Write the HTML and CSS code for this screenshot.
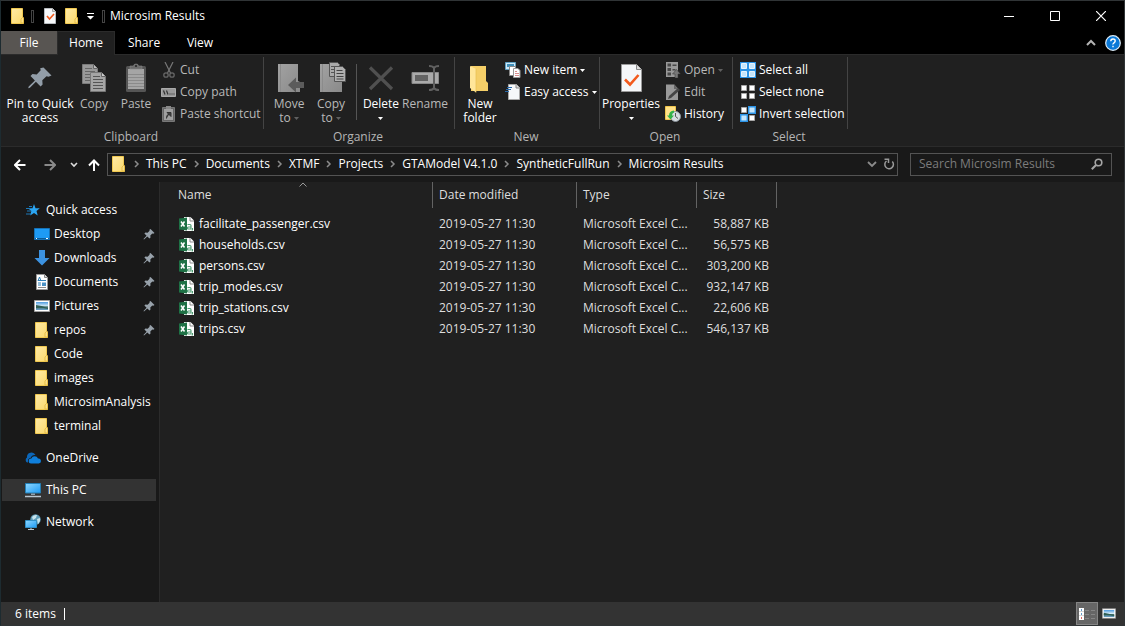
FILE: index.html
```html
<!DOCTYPE html>
<html lang="en">
<head>
  <meta charset="UTF-8">
  <meta name="viewport" content="width=device-width, initial-scale=1.0">
  <title>Microsim Results</title>
  <link rel="stylesheet" href="styles.css">
</head>
<body>

  <!-- Shared icons -->
  <svg class="sprite" aria-hidden="true">
    <linearGradient id="folder-fill" x1="0" y1="0" x2="1" y2="1">
      <stop offset="0" stop-color="#ffeaa5"/><stop offset="1" stop-color="#fbd96c"/>
    </linearGradient>
    <linearGradient id="screen-fill" x1="0" y1="0" x2="1" y2="1">
      <stop offset="0" stop-color="#8fd8ff"/><stop offset="1" stop-color="#1e9bf5"/>
    </linearGradient>
    <linearGradient id="gray-fill" x1="0" y1="0" x2="1" y2="1">
      <stop offset="0" stop-color="#a2a2a2"/><stop offset="1" stop-color="#8a8a8a"/>
    </linearGradient>
    <linearGradient id="sky-fill" x1="0" y1="0" x2="0" y2="1">
      <stop offset="0" stop-color="#4d9be0"/><stop offset="0.5" stop-color="#d5ebf7"/><stop offset="0.6" stop-color="#3b6b62"/><stop offset="1" stop-color="#6ea3cf"/>
    </linearGradient>
    <symbol id="folder" viewBox="0 0 16 16">
      <path d="M1.500 0.500h11v9.500l1 .5v5h-12z" fill="url(#folder-fill)" stroke="#f0c850"/>
      <path d="M11 15v-4l1.500-1.500h1v5.500z" fill="#fbe08a" stroke="#e3b63a" stroke-width=".8"/>
    </symbol>
    <symbol id="pushpin" viewBox="0 0 12 12">
      <path d="M7.500 1l4 4-1.200.8-1-.2-2 2 .2 2-1 1L4.300 8.400 1 11.500l-.5-.5 3.100-3.300L1.400 5.500l1-1 2.200.2 2-2-.2-1z" fill="#98a2ab"/>
    </symbol>
    <symbol id="csv" viewBox="0 0 16 16">
      <path d="M5 1h6.500L15 4.500V15H5z" fill="#fff"/>
      <path d="M11 1v4h4" fill="none" stroke="#8c8c8c"/>
      <path d="M0 2.500L8 1.500v13l-8-1z" fill="#1e7145"/>
      <path d="M2 5.500l3.500 5M5.500 5.500L2 10.500" stroke="#fff" stroke-width="1.500"/>
      <path d="M8.500 8.500h2.500q1 0 1 1V13h-2.500q-1.200 0-1.200-1t1.200-1H12M13.500 12v1.500l-.6 1" fill="none" stroke="#4f9d74" stroke-width="1.100"/>
    </symbol>
    <symbol id="caret" viewBox="0 0 5 3"><path d="M0 0h5L2.500 3z" fill="currentColor"/></symbol>
    <symbol id="chevron" viewBox="0 0 6 8"><path d="M1 1l3 3-3 3" fill="none" stroke="#8b8b8b" stroke-width="1.500"/></symbol>
    <symbol id="picture" viewBox="0 0 16 12">
      <path d="M.5.500h15v11H.5z" fill="#fff" stroke="#a0a0a0"/>
      <path d="M2 2h12v8H2z" fill="url(#sky-fill)"/>
      <path d="M2 5q5 .5 12 3v1Q7 7 2 8z" fill="#2f5f55"/>
    </symbol>
  </svg>

  <div class="window">

    <!-- Title bar -->
    <header class="title-bar">
      <svg class="icon" viewBox="0 0 16 16"><use href="#folder"/></svg>
      <span class="grip"></span>
      <button class="quick" aria-label="Properties">
        <svg class="icon" viewBox="0 0 16 16"><path d="M2.500.500h8l3 3v12h-11z" fill="#f6f8fa" stroke="#b8bcc0"/><path d="M10.500.500v3h3" fill="#ddd" stroke="#a5a5a5"/><path d="M5 8l2.500 3L12 6" fill="none" stroke="#f25a1d" stroke-width="1.600"/></svg>
      </button>
      <button class="quick" aria-label="New folder">
        <svg class="icon" viewBox="0 0 16 16"><use href="#folder"/></svg>
      </button>
      <button class="quick customize" aria-label="Customize Quick Access Toolbar">
        <svg width="7" height="7" viewBox="0 0 7 7"><path d="M0 0h7v1H0zM0 3h7L3.500 6.500z" fill="#fff"/></svg>
      </button>
      <span class="grip"></span>
      <h1>Microsim Results</h1>
      <div class="window-controls">
        <button aria-label="Minimize"><svg width="10" height="10"><path d="M0 5.500h10" stroke="#fff"/></svg></button>
        <button aria-label="Maximize"><svg width="10" height="10"><path d="M.5.500h9v9h-9z" fill="none" stroke="#fff"/></svg></button>
        <button aria-label="Close"><svg width="10" height="10"><path d="M0 0l10 10M10 0L0 10" stroke="#fff" stroke-width="1.200"/></svg></button>
      </div>
    </header>

    <!-- Ribbon tabs -->
    <nav class="tabs">
      <button class="tab file">File</button>
      <button class="tab active">Home</button>
      <button class="tab">Share</button>
      <button class="tab view">View</button>
      <div class="tabs-right">
        <button aria-label="Minimize the Ribbon"><svg width="10" height="7"><path d="M1 6l4-4 4 4" fill="none" stroke="#b4b4b4" stroke-width="2"/></svg></button>
        <button aria-label="Help"><svg width="16" height="16"><circle cx="8" cy="8" r="7.300" fill="#0a79d8" stroke="#dcecf8" stroke-width="1.200"/><path d="M5.800 6.200q0-2.200 2.200-2.200t2.200 2q0 1-1.200 1.800T8 9.500M8 10.800v1.500" fill="none" stroke="#fff" stroke-width="1.400"/></svg></button>
      </div>
    </nav>

    <!-- Ribbon -->
    <section class="ribbon">
      <div class="group clipboard">
        <div class="group-body">
          <button class="big wide">
            <svg class="large-icon" viewBox="0 0 32 32"><path d="M19.500 5.500l8 8-3 1.200-2-.4-4.200 4 .3 4.200-2 2-4.700-4.700-6 6-1.700.500.500-1.700 6.200-6-4.400-4.600 2-2 4.200.4 4-4.200-.5-2z" fill="#929da8"/></svg>
            <span>Pin to Quick<br>access</span>
          </button>
          <button class="big disabled">
            <svg class="large-icon" viewBox="0 0 32 32">
              <path d="M4.500 2.500h11l4 4v15h-15z" fill="#999" stroke="#7b7b7b"/><path d="M15.500 2.500v4h4" fill="#bbb" stroke="#666"/>
              <path d="M7 6.500h7M7 9.500h10M7 12.500h10M7 15.500h10M7 18.500h10" stroke="#666"/>
              <path d="M12.500 10.500h11l4 4v15h-15z" fill="#a5a5a5" stroke="#777"/><path d="M23.500 10.500v4h4" fill="#ccc" stroke="#666"/>
              <path d="M15 14.500h7M15 17.500h10M15 20.500h10M15 23.500h10M15 26.500h10" stroke="#555"/>
            </svg>
            <span>Copy</span>
          </button>
          <button class="big disabled">
            <svg class="large-icon" viewBox="0 0 32 32">
              <rect x="6" y="4" width="20" height="26" rx="1.500" fill="#555"/><path d="M8 7h16v20H8z" fill="#a5a5a5"/>
              <path d="M8 12.500h16M8 15.500h16M8 18.500h16M8 21.500h16M8 24.500h16" stroke="#8a8a8a"/>
              <path d="M10 7V4h3.500q0-2 2.500-2t2.500 2H22v3z" fill="#6b6b6b" stroke="#888" stroke-width=".6"/><circle cx="16" cy="4" r="1" fill="#222"/>
            </svg>
            <span>Paste</span>
          </button>
          <div class="small-list">
            <button class="small disabled"><svg class="icon" viewBox="0 0 16 16"><path d="M4 0l5.500 11M12 0L6.500 11" stroke="#777" stroke-width="1.200"/><circle cx="5" cy="13" r="2.200" fill="none" stroke="#666" stroke-width="1.300"/><circle cx="11" cy="13" r="2.200" fill="none" stroke="#666" stroke-width="1.300"/></svg>Cut</button>
            <button class="small disabled"><svg class="icon" viewBox="0 0 16 16"><path d="M.5 4.500h14v8H.5z" fill="#999" stroke="#aaa"/><path d="M2.500 6.500l1.500 4M5.500 6.500l1.500 4M8.500 10h1M10.500 10h1M12.500 10h1" stroke="#333" stroke-width="1.200"/></svg>Copy path</button>
            <button class="small disabled"><svg class="icon" viewBox="0 0 16 16"><path d="M1.500 1.500h12v14h-12z" fill="#666" stroke="#777"/><path d="M3 3h9v11H3z" fill="#a0a0a0"/><path d="M5 0h5v3H5z" fill="#888"/><path d="M5.500 12.500q-.5-4 3-4.500M6 6.500h4v4z" fill="#444" stroke="#333"/></svg>Paste shortcut</button>
          </div>
        </div>
        <h2>Clipboard</h2>
      </div>

      <div class="group organize">
        <div class="group-body">
          <button class="big disabled">
            <svg class="large-icon" viewBox="0 0 32 32"><path d="M5 2h20v17l2 1v10H5z" fill="url(#gray-fill)"/><path d="M7.500 2v28" stroke="#8b8b8b"/><path d="M15 23l8-7.500v4.500h8v6h-8v4.500z" fill="#5b5b5b"/></svg>
            <span>Move<br>to <svg class="caret"><use href="#caret"/></svg></span>
          </button>
          <button class="big disabled">
            <svg class="large-icon" viewBox="0 0 32 32">
              <path d="M5 2h20v17l2 1v10H5z" fill="url(#gray-fill)"/><path d="M7.500 2v28" stroke="#8b8b8b"/>
              <path d="M14.500.500h8l2 2v12h-10z" fill="#aaa" stroke="#555"/><path d="M16 4.500h5M16 7.500h5M16 10.500h5" stroke="#555"/>
              <path d="M19.500 4.500h8l3 3v12h-11z" fill="#b0b0b0" stroke="#555"/><path d="M21.500 8.500h6M21.500 11.500h7M21.500 14.500h7M21.500 17h7" stroke="#444"/>
            </svg>
            <span>Copy<br>to <svg class="caret"><use href="#caret"/></svg></span>
          </button>
          <span class="divider"></span>
          <button class="big">
            <svg class="large-icon" viewBox="0 0 32 32"><path d="M5 5.500l22 21.500M27 5.500L5 27" stroke="#505050" stroke-width="3.200"/></svg>
            <span>Delete<br><svg class="caret"><use href="#caret"/></svg></span>
          </button>
          <button class="big disabled rename">
            <svg class="large-icon" viewBox="0 0 32 32"><path d="M3 10.500h26.500v11H3z" fill="#aaa" stroke="#888"/><path d="M6 13h13v6H6z" fill="#636363"/><path d="M20 4q4 0 5 2 1-2 5-2M25 5v22M20 28q4 0 5-2 1 2 5 2" fill="none" stroke="#606060" stroke-width="2"/></svg>
            <span>Rename</span>
          </button>
        </div>
        <h2>Organize</h2>
      </div>

      <div class="group new">
        <div class="group-body">
          <button class="big">
            <svg class="large-icon" viewBox="0 0 32 32"><path d="M7 4h15v15l2 2v8H7z" fill="#f5cf68"/><path d="M6 4l6 3v23.500L6 26z" fill="#ffe69a"/><path d="M12 7v23.500" stroke="#e8bd50" stroke-width=".7"/></svg>
            <span>New<br>folder</span>
          </button>
          <div class="small-list">
            <button class="small"><svg class="icon" viewBox="0 0 16 16"><path d="M.5.500h10v7H.5z" fill="#cfe9f8" stroke="#5f9fc0"/><path d="M2 2h7v3H2z" fill="#3e8eb8"/><path d="M4.500 4.500h6v9h-6z" fill="#fff" stroke="#888"/><path d="M8.500 6.500h4.500l2 2v7H8.500z" fill="#fff" stroke="#999"/><path d="M10 9.500h2M10 11.500h4M10 13.500h4" stroke="#d98c8c"/></svg>New item <svg class="caret"><use href="#caret"/></svg></button>
            <button class="small"><svg class="icon" viewBox="0 0 16 16"><path d="M3.500.500h8l3 3v12h-11z" fill="#f6f8fa" stroke="#aaa"/><path d="M11 .5V4h3.500" fill="#ddd" stroke="#888"/><path d="M2 3.500h5M1 5.500h5M0 7.500h4" stroke="#2868a8"/></svg>Easy access <svg class="caret"><use href="#caret"/></svg></button>
          </div>
        </div>
        <h2>New</h2>
      </div>

      <div class="group open">
        <div class="group-body">
          <button class="big properties">
            <svg class="large-icon" viewBox="0 0 32 32"><path d="M6.500 2.500h15l5 5v22h-20z" fill="#f5f7f9" stroke="#9a9a9a"/><path d="M21.500 2.500v5h5" fill="#ddd" stroke="#888"/><path d="M10 17.500l5 5L23.500 13" fill="none" stroke="#f25a1d" stroke-width="2.600"/></svg>
            <span>Properties<br><svg class="caret"><use href="#caret"/></svg></span>
          </button>
          <div class="small-list">
            <button class="small disabled"><svg class="icon" viewBox="0 0 16 16"><path d="M1 0h12v15H1z" fill="#999"/><path d="M2.500 1.500h3.500v3H2.500zM2.500 6h3.500v3H2.500zM2.500 10.500h3.500v3H2.500zM7.500 2.500h4V4h-4zM7.500 7h3v1.500h-3z" fill="#484848"/><path d="M11.500 7.500l4 4.500H13v4h-3v-4H7.500z" fill="#777" stroke="#333" stroke-width=".5"/></svg>Open <svg class="caret"><use href="#caret"/></svg></button>
            <button class="small disabled"><svg class="icon" viewBox="0 0 16 16"><path d="M1 .5h8l4 4V16H1z" fill="#999"/><path d="M9 0v5h4" fill="#666"/><path d="M3 15l1-3 9-8 2 2-9 8z" fill="#454545"/></svg>Edit</button>
            <button class="small"><svg class="icon" viewBox="0 0 16 16"><path d="M.5.500h10v13H.5z" fill="#ffe28a" stroke="#efc54c"/><circle cx="10.500" cy="10.500" r="5" fill="#d8dde2" stroke="#8b949c"/><path d="M10.500 7v3.500l2.500 2" fill="none" stroke="#555"/><path d="M9 4.500q-5 .5-5 5H2l3.500 4L9 9.500H7q0-2.500 2-3z" fill="#35b24a"/></svg>History</button>
          </div>
        </div>
        <h2>Open</h2>
      </div>

      <div class="group select">
        <div class="group-body">
          <div class="small-list">
            <button class="small"><svg class="icon" viewBox="0 0 16 16"><path d="M0 0h16v16H0z" fill="#2b93e6"/><path d="M1.500 1.500h5v5h-5zM9.500 1.500h5v5h-5zM1.500 9.500h5v5h-5zM9.500 9.500h5v5h-5z" fill="#c5e5fb" stroke="#e6f4fd"/></svg>Select all</button>
            <button class="small"><svg class="icon" viewBox="0 0 16 16"><path d="M1.500 1.500h5v5h-5zM9.500 1.500h5v5h-5zM1.500 9.500h5v5h-5zM9.500 9.500h5v5h-5z" fill="#fff" stroke="#a8a8a8"/></svg>Select none</button>
            <button class="small"><svg class="icon" viewBox="0 0 16 16"><path d="M1.500 1.500h5v5h-5zM9.500 9.500h5v5h-5z" fill="#fff" stroke="#a8a8a8"/><path d="M8.700.700h6.600v6.600H8.700zM.7 8.700h6.600v6.600H.7z" fill="#c5e5fb" stroke="#2b93e6" stroke-width="1.400"/></svg>Invert selection</button>
          </div>
        </div>
        <h2>Select</h2>
      </div>
    </section>

    <!-- Navigation and address bar -->
    <div class="address-row">
      <div class="history">
        <button aria-label="Back"><svg width="12" height="12"><path d="M11.500 6H1.500M6 1L1 6l5 5" fill="none" stroke="#fff" stroke-width="2"/></svg></button>
        <button aria-label="Forward"><svg width="12" height="12"><path d="M.5 6h10M6 1l5 5-5 5" fill="none" stroke="#8a8a8a" stroke-width="2"/></svg></button>
        <button class="recent" aria-label="Recent locations"><svg width="8" height="6"><path d="M1 1l3 3 3-3" fill="none" stroke="#ddd" stroke-width="1.600"/></svg></button>
        <button class="up" aria-label="Up"><svg width="12" height="12"><path d="M6 12V1.500M1 6.500l5-5 5 5" fill="none" stroke="#fff" stroke-width="2"/></svg></button>
      </div>
      <nav class="address">
        <svg class="icon" viewBox="0 0 16 16"><use href="#folder"/></svg>
        <ol>
          <li><svg class="chevron"><use href="#chevron"/></svg><a href="#">This PC</a></li>
          <li><svg class="chevron"><use href="#chevron"/></svg><a href="#">Documents</a></li>
          <li><svg class="chevron"><use href="#chevron"/></svg><a href="#">XTMF</a></li>
          <li><svg class="chevron"><use href="#chevron"/></svg><a href="#">Projects</a></li>
          <li><svg class="chevron"><use href="#chevron"/></svg><a href="#">GTAModel V4.1.0</a></li>
          <li><svg class="chevron"><use href="#chevron"/></svg><a href="#">SyntheticFullRun</a></li>
          <li><svg class="chevron"><use href="#chevron"/></svg><a href="#">Microsim Results</a></li>
        </ol>
        <button aria-label="Previous locations"><svg width="10" height="7"><path d="M1 1l4 4 4-4" fill="none" stroke="#8b8b8b" stroke-width="1.800"/></svg></button>
        <button aria-label="Refresh"><svg width="12" height="12"><path d="M9.300 3.500A4.300 4.300 0 1 1 3.500 3M1.500 1.200h4V5" fill="none" stroke="#9a9a9a" stroke-width="1.500"/></svg></button>
      </nav>
      <form class="search">
        <input type="search" placeholder="Search Microsim Results" aria-label="Search Microsim Results">
        <svg width="12" height="12"><circle cx="7.500" cy="4.500" r="3.300" fill="none" stroke="#a5a5a5" stroke-width="1.600"/><path d="M5 7L.8 11.200" stroke="#a5a5a5" stroke-width="2"/></svg>
      </form>
    </div>

    <div class="content">
      <!-- Navigation pane -->
      <nav class="sidebar">
        <ul>
          <li><a href="#"><svg class="icon" viewBox="0 0 16 16"><path d="M9 2l1.500 4.200h4.300L11.500 9l1.200 4.500L9 11l-3.800 2.500L6.300 9 3 6.200h4.500z" fill="#2ba5f2"/><path d="M1 6.500h5M2 9h4M1 12h5M4 4.500h3" stroke="#1c78b8"/></svg>Quick access</a></li>
          <li class="child"><a href="#"><svg class="icon" viewBox="0 0 16 16"><path d="M.5 2.500h15v11H.5z" fill="#1e9bf5" stroke="#1673b8"/><path d="M1 12.500h14" stroke="#0d5c98"/><path d="M2 12.500h1M12 12.500h2" stroke="#fff"/></svg>Desktop</a><svg class="pin"><use href="#pushpin"/></svg></li>
          <li class="child"><a href="#"><svg class="icon" viewBox="0 0 16 16"><path d="M5 0h6v8h4.500L8 15.500.5 8H5z" fill="#3c92e0"/></svg>Downloads</a><svg class="pin"><use href="#pushpin"/></svg></li>
          <li class="child"><a href="#"><svg class="icon" viewBox="0 0 16 16"><path d="M2.500.500h8l3 3v12h-11z" fill="#fff" stroke="#999"/><path d="M10.500.500v3h3" fill="#ddd" stroke="#888"/><path d="M4 7l1.500-4L7 7M4 6.500h8M4 9h3M4 11h3" fill="none" stroke="#2f80b8"/><path d="M8 8.500h4V12H8z" fill="#4b91c4"/><path d="M4 13.500h8" stroke="#8c8c8c"/></svg>Documents</a><svg class="pin"><use href="#pushpin"/></svg></li>
          <li class="child"><a href="#"><svg class="icon" viewBox="0 0 16 12"><use href="#picture"/></svg>Pictures</a><svg class="pin"><use href="#pushpin"/></svg></li>
          <li class="child"><a href="#"><svg class="icon" viewBox="0 0 16 16"><use href="#folder"/></svg>repos</a><svg class="pin"><use href="#pushpin"/></svg></li>
          <li class="child"><a href="#"><svg class="icon" viewBox="0 0 16 16"><use href="#folder"/></svg>Code</a></li>
          <li class="child"><a href="#"><svg class="icon" viewBox="0 0 16 16"><use href="#folder"/></svg>images</a></li>
          <li class="child"><a href="#"><svg class="icon" viewBox="0 0 16 16"><use href="#folder"/></svg>MicrosimAnalysis</a></li>
          <li class="child"><a href="#"><svg class="icon" viewBox="0 0 16 16"><use href="#folder"/></svg>terminal</a></li>
        </ul>
        <ul>
          <li><a href="#"><svg class="icon" viewBox="0 0 16 16"><path d="M2 12.500a3 3 0 0 1 0-5A4.500 4.500 0 0 1 10.500 5Q7 4.500 5.500 8 2.500 8.500 3 12.500z" fill="#0c66b8"/><path d="M6 13.500a2.500 2.500 0 0 1 .3-5 3.600 3.600 0 0 1 6.700 0 2.500 2.500 0 0 1 .8 5z" fill="#0f7fdb"/></svg>OneDrive</a></li>
        </ul>
        <ul>
          <li class="selected"><a href="#"><svg class="icon" viewBox="0 0 16 16"><path d="M.5 1.500h15v9.500H.5z" fill="url(#screen-fill)" stroke="#247fb5"/><path d="M6 11.500h4v1.500H6z" fill="#8fa2b0"/><path d="M0 14.500h16" stroke="#b8c6d0" stroke-width="1.500"/></svg>This PC</a></li>
        </ul>
        <ul>
          <li><a href="#"><svg class="icon" viewBox="0 0 16 16"><circle cx="10.500" cy="5.500" r="5.200" fill="#5e9cb8"/><path d="M7 3q2-2.500 5-2l-1 3-3 2zM12 5l3-1v3l-2 3z" fill="#c7e3ec"/><path d="M.5 6.500h11v7H.5z" fill="url(#screen-fill)" stroke="#2f8fc7"/><path d="M6 14v1M3 15.500h6" stroke="#b8c6d0"/></svg>Network</a></li>
        </ul>
      </nav>

      <!-- File list -->
      <main class="files">
        <table>
          <colgroup>
            <col class="col-name"><col class="col-date"><col class="col-type"><col class="col-size"><col>
          </colgroup>
          <thead>
            <tr>
              <th class="sorted">Name<svg width="8" height="5"><path d="M.5 4.500L4 1l3.500 3.500" fill="none" stroke="#999"/></svg></th>
              <th>Date modified</th><th>Type</th><th>Size</th><td></td>
            </tr>
          </thead>
          <tbody>
            <tr><td><svg class="icon"><use href="#csv"/></svg>facilitate_passenger.csv</td><td>2019-05-27 11:30</td><td>Microsoft Excel C...</td><td>58,887 KB</td></tr>
            <tr><td><svg class="icon"><use href="#csv"/></svg>households.csv</td><td>2019-05-27 11:30</td><td>Microsoft Excel C...</td><td>56,575 KB</td></tr>
            <tr><td><svg class="icon"><use href="#csv"/></svg>persons.csv</td><td>2019-05-27 11:30</td><td>Microsoft Excel C...</td><td>303,200 KB</td></tr>
            <tr><td><svg class="icon"><use href="#csv"/></svg>trip_modes.csv</td><td>2019-05-27 11:30</td><td>Microsoft Excel C...</td><td>932,147 KB</td></tr>
            <tr><td><svg class="icon"><use href="#csv"/></svg>trip_stations.csv</td><td>2019-05-27 11:30</td><td>Microsoft Excel C...</td><td>22,606 KB</td></tr>
            <tr><td><svg class="icon"><use href="#csv"/></svg>trips.csv</td><td>2019-05-27 11:30</td><td>Microsoft Excel C...</td><td>546,137 KB</td></tr>
          </tbody>
        </table>
      </main>
    </div>

    <!-- Status bar -->
    <footer class="status-bar">
      <span>6 items</span>
      <span class="status-divider"></span>
      <div class="view-modes">
        <button class="active" aria-label="Details"><svg width="16" height="14"><path d="M0 1h5v12H0z" fill="#fff"/><path d="M2 3h1M2 7h1" stroke="#2b78b8" stroke-width="1.500"/><path d="M2 11h1" stroke="#c33" stroke-width="1.500"/><path d="M0 4.500h5M0 8.500h5" stroke="#bbb" stroke-width=".6"/><path d="M6 3.500h4M12 3.500h4M6 7.500h4M12 7.500h4M6 11.500h4M12 11.500h4" stroke="#858585"/></svg></button>
        <button aria-label="Large icons"><svg width="14" height="11" viewBox="0 0 16 12"><use href="#picture"/></svg></button>
      </div>
    </footer>
  </div>

</body>
</html>
```
FILE: styles.css
```css
/* General Reset */
* {
  margin: 0;
  padding: 0;
  box-sizing: border-box;
}

body {
  background-color: #191919;
  color: #fff;
  font-family: "Open Sans", "Noto Sans", sans-serif;
  font-size: 12px;
  line-height: 16px;
}

button, input {
  font: inherit;
  color: inherit;
  background: none;
  border: none;
}

h1, h2, th {
  font-size: 12px;
  font-weight: normal;
}

a {
  color: inherit;
  text-decoration: none;
}

ul, ol {
  list-style: none;
}

svg {
  flex: none;
}

.sprite {
  position: absolute;
  width: 0;
  height: 0;
}

.icon {
  width: 16px;
  height: 16px;
}

.caret {
  width: 5px;
  height: 3px;
  vertical-align: middle;
}

.window {
  display: flex;
  flex-direction: column;
  min-height: 100vh;
  border: 1px solid #303436;
  border-left-color: #1d2b30;
}

/* Title Bar */
.title-bar {
  display: flex;
  align-items: center;
  height: 30px;
  padding-left: 9px;
  background-color: #000;
}

.grip {
  width: 3px;
  height: 13px;
  margin: 0 5px;
  border: 1px solid #444;
}

.quick {
  display: flex;
  width: 22px;
  justify-content: center;
}

.quick.customize {
  width: 14px;
}

.window-controls {
  display: flex;
  align-self: stretch;
  margin-left: auto;
}

.window-controls button {
  display: flex;
  align-items: center;
  justify-content: center;
  width: 46px;
}

/* Tabs */
.tabs {
  display: flex;
  height: 23px;
  background-color: #000;
}

.tab {
  width: 58px;
}

.tab.file {
  width: 56px;
  background-color: #585552;
}

.tab.active {
  position: relative;
  margin-bottom: -1px;
  padding-bottom: 2px;
  background-color: #202020;
  border: 1px solid #2b2b2b;
  border-bottom: none;
}

.tab.view {
  width: 54px;
}

.tabs-right {
  display: flex;
  align-items: center;
  gap: 9px;
  margin-left: auto;
  padding-right: 3px;
}

.tabs-right button {
  display: flex;
}

/* Ribbon */
.ribbon {
  display: flex;
  padding-top: 2px;
  background-color: #202020;
  border: solid #2b2b2b;
  border-width: 1px 0;
}

.group {
  display: flex;
  flex-direction: column;
  width: 145px;
  padding-bottom: 1px;
}

.group.clipboard {
  width: 263px;
}

.group.organize {
  width: 191px;
}

.group.open {
  width: 133px;
}

.group.select {
  width: 115px;
}

.group-body {
  display: flex;
  height: 72px;
  padding-left: 4px;
  border-right: 1px solid #444;
}

.clipboard .group-body {
  padding-left: 6px;
}

.open .group-body {
  padding-left: 1px;
}

.select .group-body {
  padding-left: 3px;
}

.group h2 {
  padding-right: 3px;
  color: #b5b5b5;
  text-align: center;
}

.big {
  display: flex;
  flex-direction: column;
  align-items: center;
  width: 42px;
  padding-top: 5px;
  line-height: 14px;
  white-space: nowrap;
}

.big.wide {
  width: 66px;
}

.big.rename {
  width: 46px;
}

.big.properties {
  width: 60px;
}

.large-icon {
  width: 32px;
  height: 32px;
  margin-bottom: 3px;
}

.disabled {
  color: #b9b9b9;
}

.disabled .caret {
  color: #606060;
}

.divider {
  width: 1px;
  height: 56px;
  margin: 7px 3px 0 4px;
  background-color: #555;
}

.small-list {
  padding: 2px 0 0 4px;
}

.small {
  display: flex;
  align-items: center;
  gap: 3px;
  height: 22px;
  white-space: nowrap;
}

/* Address Bar */
.address-row {
  display: flex;
  height: 35px;
  padding: 6px 12px 6px 13px;
  background-color: #191919;
}

.history {
  display: flex;
  align-items: center;
  width: 93px;
}

.history button {
  display: flex;
  width: 12px;
  margin-right: 18px;
}

.history .recent {
  width: 8px;
  margin: 0 10px 0 -4px;
}

.history .up {
  margin-right: 0;
}

.address {
  display: flex;
  flex: 1;
  align-items: center;
  margin-right: 12px;
  padding: 0 2px 1px 3px;
  border: 1px solid #535353;
}

.address ol {
  display: flex;
  flex: 1;
}

.address li {
  display: flex;
  align-items: center;
}

.chevron {
  width: 6px;
  height: 8px;
  margin: 0 6px 0 7px;
}

.address button {
  display: flex;
  margin-left: 6px;
}

.search {
  display: flex;
  align-items: center;
  width: 202px;
  padding: 0 8px 1px;
  border: 1px solid #535353;
}

.search input {
  flex: 1;
  min-width: 0;
  outline: none;
}

.search input::placeholder {
  color: #7c7c7c;
}

/* Content */
.content {
  display: flex;
  flex: 1;
}

.sidebar {
  width: 159px;
  padding: 16px 3px 0 1px;
  border-right: 1px solid #2b2b2b;
}

.sidebar ul {
  margin-bottom: 8px;
}

.sidebar li {
  display: flex;
  align-items: center;
  height: 24px;
  padding-left: 23px;
}

.sidebar li.child {
  padding-left: 32px;
}

.sidebar li.selected {
  background-color: #333;
  border: solid #191919;
  border-width: 1px 0;
}

.sidebar a {
  display: flex;
  flex: 1;
  gap: 5px;
}

.sidebar .child a {
  gap: 4px;
}

.pin {
  width: 12px;
  height: 12px;
  margin-right: 1px;
}

/* File List */
.files {
  flex: 1;
  background-color: #202020;
}

table {
  width: 100%;
  table-layout: fixed;
  border-spacing: 0;
}

.col-name {
  width: 273px;
}

.col-date {
  width: 144px;
}

.col-type {
  width: 120px;
}

.col-size {
  width: 80px;
}

th {
  height: 26px;
  padding-left: 6px;
  color: #dedede;
  text-align: left;
  border-right: 1px solid #636363;
}

th.sorted {
  position: relative;
  padding-left: 18px;
}

/* Sort arrow sits on the top edge of the header */
th.sorted svg {
  position: absolute;
  top: 0;
  left: 51%;
}

tbody::before {
  content: "";
  display: block;
  height: 5px;
}

tbody td {
  height: 21px;
  padding-left: 6px;
  color: #dedede;
  white-space: nowrap;
}

tbody td:first-child {
  padding-left: 19px;
  color: #fff;
}

tbody td:nth-child(4) {
  padding-right: 8px;
  text-align: right;
}

tbody .icon {
  margin-right: 4px;
  vertical-align: text-bottom;
}

/* Status Bar */
.status-bar {
  display: flex;
  align-items: center;
  height: 23px;
  padding-left: 14px;
  background-color: #333;
}

.status-divider {
  width: 1px;
  height: 12px;
  margin-left: 8px;
  background-color: #fff;
}

.view-modes {
  display: flex;
  align-self: stretch;
  margin-left: auto;
  padding-right: 4px;
}

.view-modes button {
  display: flex;
  align-items: center;
  justify-content: center;
  width: 22px;
}

.view-modes button.active {
  background-color: #666;
  border: 1px solid #858585;
}
```
